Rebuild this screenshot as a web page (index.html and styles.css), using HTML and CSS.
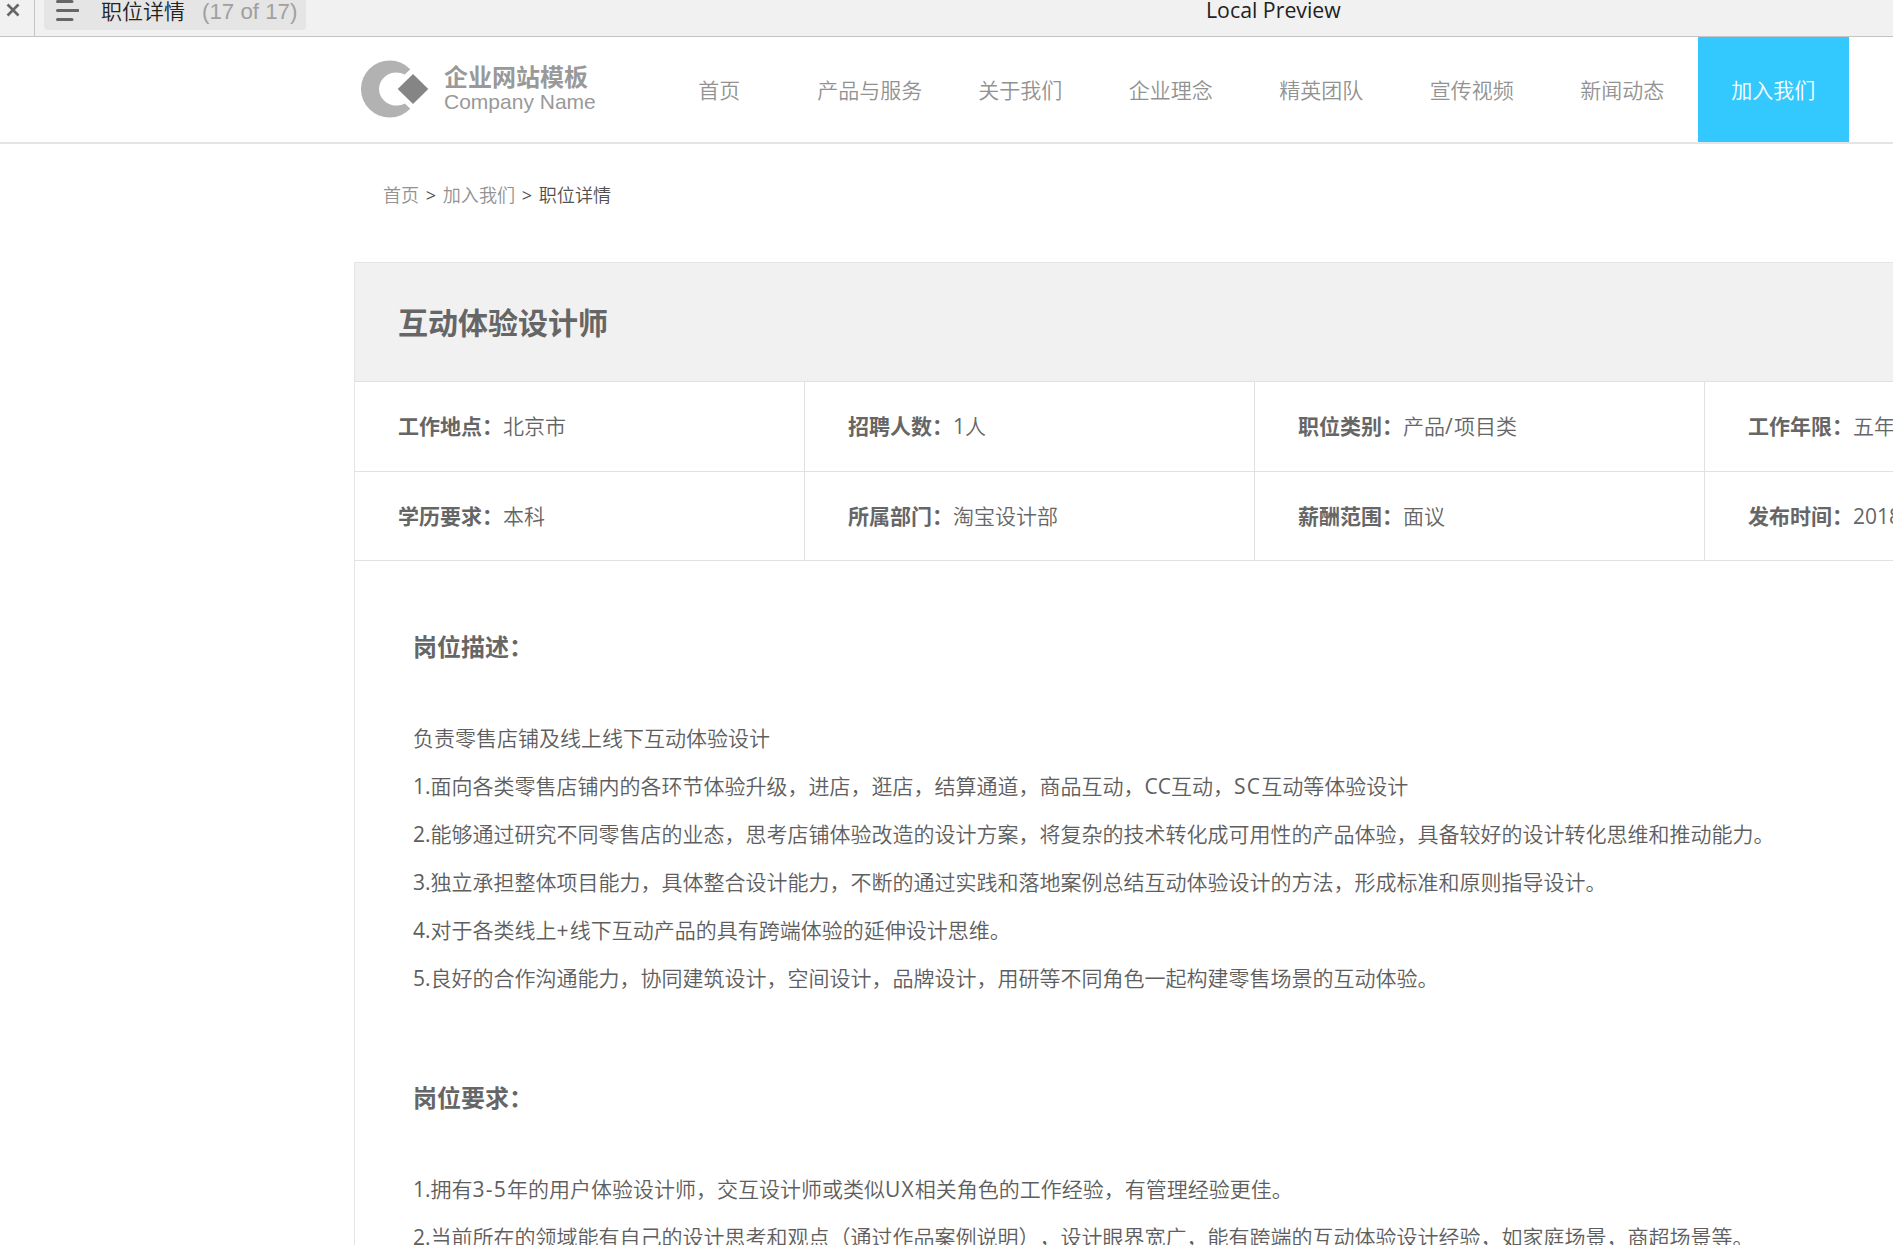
FILE: index.html
```
<!DOCTYPE html>
<html lang="zh-CN">
<head>
  <meta charset="UTF-8">
  <title>职位详情</title>
  <link rel="stylesheet" href="styles.css">
</head>
<body>

  <!-- Preview toolbar -->
  <div class="toolbar">
    <button class="close-btn" aria-label="close">
      <svg width="14" height="16" viewBox="0 0 14 16"><path d="M1.5 2.5L12.5 13.5M12.5 2.5L1.5 13.5"/></svg>
    </button>
    <div class="page-chip">
      <svg width="24" height="28" viewBox="0 0 24 28"><path d="M2.5 4.5H17M2.5 13.5H23M2.5 22.5H17"/></svg>
      <span class="page-name">职位详情</span>
      <span class="page-count">(17 of 17)</span>
    </div>
    <span class="preview-title">Local Preview</span>
  </div>

  <!-- Header -->
  <header>
    <a class="logo">
      <svg width="70" height="58" viewBox="0 0 70 58">
        <path fill="#b2b2b2" d="M50.3 9.2A28.7 28.5 0 1 0 50.3 48.8L44.8 43.4A17.3 16.5 0 1 1 44.8 14.6Z"/>
        <path fill="#858585" d="M53 14L68.3 29L53 44L37.7 29Z"/>
      </svg>
      <span class="logo-text">
        <strong>企业网站模板</strong>
        <span>Company Name</span>
      </span>
    </a>
    <nav>
      <a>首页</a>
      <a>产品与服务</a>
      <a>关于我们</a>
      <a>企业理念</a>
      <a>精英团队</a>
      <a>宣传视频</a>
      <a>新闻动态</a>
      <a class="active">加入我们</a>
    </nav>
  </header>

  <main>
    <div class="breadcrumb">
      <a>首页</a><span class="sep">&gt;</span><a>加入我们</a><span class="sep">&gt;</span><span>职位详情</span>
    </div>

    <!-- Job detail -->
    <div class="job">
      <h1>互动体验设计师</h1>
      <div class="job-info">
        <div><b>工作地点：</b>北京市</div>
        <div><b>招聘人数：</b><i>1</i>人</div>
        <div><b>职位类别：</b>产品<i class="wide">/</i>项目类</div>
        <div><b>工作年限：</b>五年</div>
        <div><b>学历要求：</b>本科</div>
        <div><b>所属部门：</b>淘宝设计部</div>
        <div><b>薪酬范围：</b>面议</div>
        <div><b>发布时间：</b><i>2018</i></div>
      </div>

      <section>
        <h2>岗位描述：</h2>
        <p>负责零售店铺及线上线下互动体验设计</p>
        <p><i>1.</i>面向各类零售店铺内的各环节体验升级，进店，逛店，结算通道，商品互动，<i>CC</i>互动，<i class="wide">SC</i>互动等体验设计</p>
        <p><i>2.</i>能够通过研究不同零售店的业态，思考店铺体验改造的设计方案，将复杂的技术转化成可用性的产品体验，具备较好的设计转化思维和推动能力。</p>
        <p><i>3.</i>独立承担整体项目能力，具体整合设计能力，不断的通过实践和落地案例总结互动体验设计的方法，形成标准和原则指导设计。</p>
        <p><i>4.</i>对于各类线上<i class="wide">+</i>线下互动产品的具有跨端体验的延伸设计思维。</p>
        <p><i>5.</i>良好的合作沟通能力，协同建筑设计，空间设计，品牌设计，用研等不同角色一起构建零售场景的互动体验。</p>
      </section>

      <section>
        <h2>岗位要求：</h2>
        <p><i>1.</i>拥有<i class="wide">3-5</i>年的用户体验设计师，交互设计师或类似<i class="wide">UX</i>相关角色的工作经验，有管理经验更佳。</p>
        <p><i>2.</i>当前所在的领域能有自己的设计思考和观点（通过作品案例说明），设计眼界宽广，能有跨端的互动体验设计经验，如家庭场景，商超场景等。</p>
      </section>
    </div>
  </main>

</body>
</html>
```
FILE: styles.css
```
* {
  margin: 0;
  padding: 0;
  box-sizing: border-box;
}
html {
  overflow: hidden;
}
body {
  font-family: "Open Sans", "Noto Sans CJK SC", sans-serif;
  font-size: 21px;
  font-weight: 400;
  background-color: #fff;
  color: #666;
  height: 1245px;
  overflow: hidden;
  text-spacing-trim: space-all;
}

/* Latin letters and digits inside Chinese text */
i {
  font-style: normal;
  font-weight: 400;
}
.wide {
  letter-spacing: 1.2px;
}

/* Toolbar */
.toolbar {
  display: flex;
  height: 37px;
  background-color: #f1f1f1;
  border-bottom: 1px solid #c4c4c4;
  color: #222;
}
.toolbar svg {
  fill: none;
  stroke: #666;
  stroke-width: 3;
  stroke-linecap: round;
}
.close-btn {
  width: 35px;
  padding: 0 0 0 6px;
  background: none;
  border: none;
  border-right: 1px solid #c4c4c4;
  text-align: left;
}
.close-btn svg {
  display: block;
  margin-bottom: 17px;
}
.close-btn path {
  stroke-width: 2.6;
  stroke-linecap: butt;
}
.page-chip {
  display: flex;
  width: 262px;
  height: 30px;
  margin-left: 9px;
  padding-left: 11px;
  background-color: #e5e5e5;
  border-radius: 0 0 4px 4px;
  line-height: 22px;
  white-space: nowrap;
}
.page-chip svg {
  margin-top: -3px;
}
.page-name {
  margin-left: 22px;
  font-weight: 350;
}
.page-count {
  margin-left: 17px;
  font-family: "Liberation Sans", sans-serif;
  font-size: 22.3px;
  line-height: 23px;
  color: #a0a0a0;
}
.preview-title {
  margin-left: 900px;
  font-size: 21.3px;
  line-height: 20px;
  white-space: nowrap;
}

/* Header */
header {
  display: flex;
  height: 107px;
  padding-left: 360px;
  border-bottom: 2px solid #e4e4e4;
}
.logo {
  display: flex;
  width: 284px;
  padding-top: 23px;
  color: #999;
}
.logo-text {
  margin-left: 14px;
  display: flex;
  flex-direction: column;
}
.logo-text strong {
  font-size: 24px;
  line-height: 34px;
}
.logo-text span {
  font-family: "Liberation Sans", sans-serif;
  font-size: 21px;
  line-height: 16px;
}
nav {
  display: flex;
}
nav a {
  width: 150.5px;
  line-height: 107px;
  height: 105px;
  font-weight: 350;
  text-align: center;
  color: #929292;
}
nav a.active {
  width: 151.5px;
  background-color: #33c9fe;
  color: #fff;
}

/* Breadcrumb */
.breadcrumb {
  display: flex;
  gap: 6.6px;
  padding: 37px 0 0 383px;
  font-size: 18.1px;
  font-weight: 350;
  line-height: 28px;
}
.breadcrumb a {
  color: #929292;
}
.breadcrumb span {
  color: #505050;
}
.breadcrumb .sep {
  font-weight: 400;
}

/* Job detail */
.job {
  width: 1801px;
  height: 1400px;
  margin: 53px 0 0 354px;
  border: 1px solid #e4e4e4;
}
h1 {
  height: 118px;
  padding-left: 43px;
  background-color: #f1f1f1;
  font-size: 30px;
  line-height: 120px;
}
.job-info {
  display: grid;
  grid-template-columns: repeat(4, 450px);
  grid-template-rows: 90px 88px;
  border-top: 1px solid #e1e1e1;
  border-bottom: 1px solid #e1e1e1;
}
.job-info div {
  padding-left: 43px;
  border-right: 1px solid #e1e1e1;
  font-weight: 350;
  line-height: 88px;
  white-space: nowrap;
}
.job-info b {
  font-weight: 700;
}
.job-info div:nth-child(-n+4) {
  border-bottom: 1px solid #e1e1e1;
}
section {
  padding: 61px 0 0 58px;
}
section + section {
  padding-top: 71px;
}
h2 {
  margin-bottom: 42px;
  font-size: 24px;
  line-height: 50px;
}
section p {
  font-weight: 350;
  color: #5e5e5e;
  line-height: 48px;
  white-space: nowrap;
}
```
